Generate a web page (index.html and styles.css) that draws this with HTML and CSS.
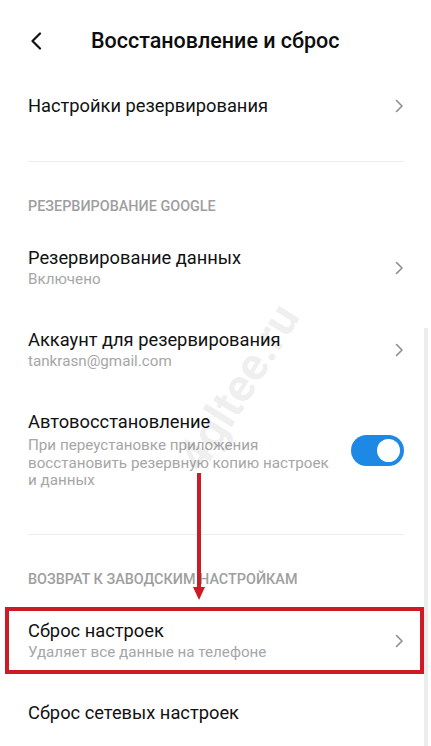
FILE: index.html
```html
<!DOCTYPE html>
<html lang="ru">
<head>
<meta charset="utf-8">
<title>Восстановление и сброс</title>
<link rel="stylesheet" href="styles.css">
</head>
<body>
<div class="screen">
  <header class="header">
    <svg class="back" width="12" height="18" viewBox="0 0 12 18"><path d="M10 1.5 L2.5 9 L10 16.5" fill="none" stroke="#111" stroke-width="2.2" stroke-linecap="round" stroke-linejoin="round"/></svg>
    <h1 class="title">Восстановление и сброс</h1>
  </header>

  <div class="row row-first">
    <div class="text"><div class="name">Настройки резервирования</div></div>
    <svg class="chev" width="9" height="14" viewBox="0 0 9 14"><path d="M1.5 1.5 L7 7 L1.5 12.5" fill="none" stroke="#8e8e8e" stroke-width="1.6" stroke-linecap="round" stroke-linejoin="round"/></svg>
  </div>

  <div class="divider"></div>
  <div class="caption">Резервирование Google</div>

  <div class="row">
    <div class="text"><div class="name">Резервирование данных</div><div class="sub">Включено</div></div>
    <svg class="chev" width="9" height="14" viewBox="0 0 9 14"><path d="M1.5 1.5 L7 7 L1.5 12.5" fill="none" stroke="#8e8e8e" stroke-width="1.6" stroke-linecap="round" stroke-linejoin="round"/></svg>
  </div>

  <div class="row">
    <div class="text"><div class="name">Аккаунт для резервирования</div><div class="sub">tankrasn@gmail.com</div></div>
    <svg class="chev" width="9" height="14" viewBox="0 0 9 14"><path d="M1.5 1.5 L7 7 L1.5 12.5" fill="none" stroke="#8e8e8e" stroke-width="1.6" stroke-linecap="round" stroke-linejoin="round"/></svg>
  </div>

  <div class="row">
    <div class="text narrow"><div class="name">Автовосстановление</div><div class="sub multi">При переустановке приложения восстановить резервную копию настроек и данных</div></div>
    <div class="toggle"><div class="knob"></div></div>
  </div>

  <div class="divider"></div>
  <div class="caption">Возврат к заводским настройкам</div>

  <div class="row marked">
    <div class="text"><div class="name">Сброс настроек</div><div class="sub">Удаляет все данные на телефоне</div></div>
    <svg class="chev" width="9" height="14" viewBox="0 0 9 14"><path d="M1.5 1.5 L7 7 L1.5 12.5" fill="none" stroke="#8e8e8e" stroke-width="1.6" stroke-linecap="round" stroke-linejoin="round"/></svg>
    <div class="redbox"></div>
  </div>

  <div class="row">
    <div class="text"><div class="name">Сброс сетевых настроек</div></div>
  </div>

  <div class="arrow">
    <div class="shaft"></div>
    <div class="head"></div>
  </div>
  <div class="scrollbar"></div>
  <div class="watermark">4gltee.ru</div>
</div>
</body>
</html>
```

FILE: styles.css
```css
* { box-sizing: border-box; }
html, body { margin: 0; padding: 0; background: #fff; }
body { font-family: Roboto, "Noto Sans", "Liberation Sans", sans-serif; color: #111; }

.screen { position: relative; width: 431px; height: 746px; overflow: hidden; background: #fff; }

.header { height: 80px; display: flex; align-items: center; padding-left: 30px; }
.back { display: block; margin-top: 1px; }
.title { margin: 0 0 0 49px; font-size: 21.5px; font-weight: 500; letter-spacing: 0; color: #0d0d0d; }

.row { position: relative; display: flex; align-items: center; padding: 20px 27px 20px 28px; }
.row-first { padding-top: 15px; }
.text { flex: 1; min-width: 0; }
.text.narrow { flex: 0 0 308px; }
.name { font-size: 18.3px; line-height: 22px; color: #111; }
.sub { font-size: 15.2px; line-height: 20px; color: #a6a6a6; }
.sub.multi { line-height: 17.5px; margin-top: 4px; }
.chev { display: block; flex: none; }

.divider { height: 1px; background: #ececec; margin: 24px 27px 0 28px; }
.caption { padding: 35px 28px 10px; font-size: 14.4px; line-height: 20px; font-weight: 500; color: #9e9e9e; text-transform: uppercase; }

.toggle { margin-left: auto; width: 53px; height: 31px; border-radius: 16px; background: #1e88e5; position: relative; flex: none; }
.knob { position: absolute; right: 4px; top: 4px; width: 23px; height: 23px; border-radius: 50%; background: #fff; }

.redbox { position: absolute; left: 5px; right: 7px; top: 7px; bottom: 8px; border: 4px solid #cc1b24; pointer-events: none; }

.arrow { position: absolute; left: 192px; top: 473px; width: 13px; display: flex; flex-direction: column; align-items: center; }
.shaft { width: 4px; height: 114px; background: #cc1b24; }
.head { width: 0; height: 0; border-left: 6.5px solid transparent; border-right: 6.5px solid transparent; border-top: 13px solid #cc1b24; }

.scrollbar { position: absolute; left: 424px; top: 328px; width: 4px; bottom: 0; background: #ececec; }

.watermark { position: absolute; left: 145px; top: 360px; font-size: 46px; font-weight: 700; color: rgba(0,0,0,0.08); transform: rotate(-58deg); transform-origin: center; white-space: nowrap; pointer-events: none; }
```
